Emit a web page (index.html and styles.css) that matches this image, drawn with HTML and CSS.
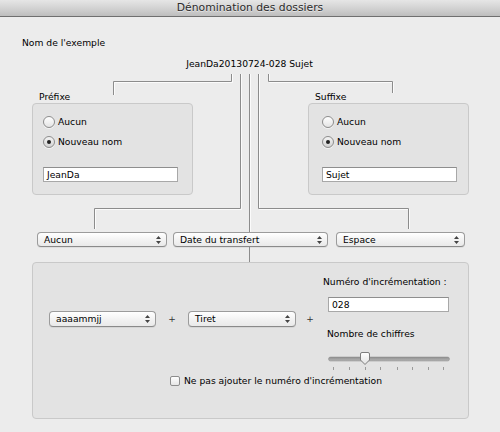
FILE: index.html
```html
<!DOCTYPE html>
<html lang="fr">
<head>
<meta charset="utf-8">
<title>Dénomination des dossiers</title>
<link rel="stylesheet" href="styles.css">
</head>
<body>
<div class="window">
  <div class="titlebar">Dénomination des dossiers</div>
  <div class="content">
    <div class="example-label">Nom de l'exemple</div>
    <div class="sample">JeanDa20130724-028 Sujet</div>

    <div class="groups">
      <div class="group">
        <div class="group-label">Préfixe</div>
        <div class="box">
          <div class="radio-row"><span class="radio"></span>Aucun</div>
          <div class="radio-row second"><span class="radio checked"></span>Nouveau nom</div>
          <div class="field">JeanDa</div>
        </div>
      </div>
      <div class="group group-right">
        <div class="group-label">Suffixe</div>
        <div class="box">
          <div class="radio-row"><span class="radio"></span>Aucun</div>
          <div class="radio-row second"><span class="radio checked"></span>Nouveau nom</div>
          <div class="field">Sujet</div>
        </div>
      </div>
    </div>

    <div class="selects">
      <div class="select sel-aucun">Aucun<svg class="arrows" width="5" height="8" viewBox="0 0 5 8"><path d="M2.5 0 L5 3 L0 3 Z M0 5 L5 5 L2.5 8 Z"/></svg></div>
      <div class="select sel-date">Date du transfert<svg class="arrows" width="5" height="8" viewBox="0 0 5 8"><path d="M2.5 0 L5 3 L0 3 Z M0 5 L5 5 L2.5 8 Z"/></svg></div>
      <div class="select sel-espace">Espace<svg class="arrows" width="5" height="8" viewBox="0 0 5 8"><path d="M2.5 0 L5 3 L0 3 Z M0 5 L5 5 L2.5 8 Z"/></svg></div>
    </div>

    <div class="panel">
      <div class="panel-top">
        <div class="format">
          <div class="select sel-date-fmt">aaaammjj<svg class="arrows" width="5" height="8" viewBox="0 0 5 8"><path d="M2.5 0 L5 3 L0 3 Z M0 5 L5 5 L2.5 8 Z"/></svg></div>
          <div class="plus plus-a">+</div>
          <div class="select sel-tiret">Tiret<svg class="arrows" width="5" height="8" viewBox="0 0 5 8"><path d="M2.5 0 L5 3 L0 3 Z M0 5 L5 5 L2.5 8 Z"/></svg></div>
          <div class="plus plus-b">+</div>
        </div>
        <div class="incr">
          <div class="incr-label">Numéro d'incrémentation :</div>
          <div class="field incr-field">028</div>
          <div class="digits-label">Nombre de chiffres</div>
          <svg class="slider" width="122" height="20" viewBox="0 0 122 20">
            <defs>
              <linearGradient id="trk" x1="0" y1="0" x2="0" y2="1">
                <stop offset="0" stop-color="#8f8f8f"/>
                <stop offset="1" stop-color="#b5b5b5"/>
              </linearGradient>
              <linearGradient id="knb" x1="0" y1="0" x2="0" y2="1">
                <stop offset="0" stop-color="#ffffff"/>
                <stop offset="1" stop-color="#e2e2e2"/>
              </linearGradient>
            </defs>
            <rect x="0.5" y="6" width="121" height="4" rx="2" fill="url(#trk)" stroke="#8a8a8a" stroke-width="0.5"/>
            <path d="M32.5 3 Q32.5 1.5 34 1.5 L40 1.5 Q41.5 1.5 41.5 3 L41.5 9 L37 13.5 L32.5 9 Z" fill="url(#knb)" stroke="#7d7d7d" stroke-width="1"/>
            <g stroke="#9a9a9a" stroke-width="1">
              <line x1="5.5" y1="16" x2="5.5" y2="19"/>
              <line x1="21.5" y1="16" x2="21.5" y2="19"/>
              <line x1="37.5" y1="16" x2="37.5" y2="19"/>
              <line x1="52.5" y1="16" x2="52.5" y2="19"/>
              <line x1="69.5" y1="16" x2="69.5" y2="19"/>
              <line x1="84.5" y1="16" x2="84.5" y2="19"/>
              <line x1="100.5" y1="16" x2="100.5" y2="19"/>
              <line x1="115.5" y1="16" x2="115.5" y2="19"/>
            </g>
          </svg>
        </div>
      </div>
      <div class="check-row"><span class="checkbox"></span>Ne pas ajouter le numéro d'incrémentation</div>
    </div>
  </div>

  <svg class="connectors" width="500" height="432" viewBox="0 0 500 432">
    <g fill="none" stroke="#ffffff" stroke-width="1" opacity="0.8">
      <polyline points="114.5,95 114.5,82.5 232.5,82.5 232.5,74"/>
      <polyline points="269.5,74 269.5,82.5 393.5,82.5 393.5,93"/>
      <polyline points="241.5,74 241.5,209.5 95.5,209.5 95.5,229"/>
      <polyline points="259.5,74 259.5,209.5 409.5,209.5 409.5,229"/>
      <line x1="250.5" y1="74" x2="250.5" y2="232"/>
    </g>
    <g fill="none" stroke="#8c8c8c" stroke-width="1">
      <polyline points="113.5,95 113.5,81.5 231.5,81.5 231.5,74"/>
      <polyline points="268.5,74 268.5,81.5 392.5,81.5 392.5,93"/>
      <polyline points="240.5,74 240.5,208.5 94.5,208.5 94.5,229"/>
      <polyline points="258.5,74 258.5,208.5 408.5,208.5 408.5,229"/>
      <line x1="249.5" y1="74" x2="249.5" y2="232"/>
      <line x1="249.5" y1="247" x2="249.5" y2="262"/>
    </g>
  </svg>
</div>
</body>
</html>
```

FILE: styles.css
```css
* { box-sizing: border-box; }

html, body {
  margin: 0;
  padding: 0;
  width: 500px;
  height: 432px;
  overflow: hidden;
  background: #ececec;
}

body {
  font-family: "DejaVu Sans", "Liberation Sans", sans-serif;
  font-size: 9.2px;
  color: #000;
}

.window {
  position: relative;
  width: 500px;
  height: 432px;
}

.titlebar {
  height: 17px;
  line-height: 16px;
  text-align: center;
  font-size: 10.8px;
  color: #2c2c2c;
  text-shadow: 0 1px 0 rgba(255,255,255,0.5);
  background: linear-gradient(#e6e6e6, #cfcfcf 60%, #bdbdbd);
  border-bottom: 1px solid #6f6f6f;
}

.content {
  line-height: 12px;
}

.example-label {
  margin-top: 20px;
  padding-left: 22px;
}

.sample {
  margin-top: 9px;
  text-align: center;
  padding-right: 1px;
}

.groups {
  display: flex;
  justify-content: space-between;
  margin-top: 21px;
  padding: 0 31px 0 32px;
}

.group {
  width: 161px;
}

.group-label {
  padding-left: 7px;
  height: 12px;
}

.box {
  height: 92px;
  background: #e3e3e3;
  border: 1px solid #c9c9c9;
  border-radius: 4px;
  padding: 12px 0 0 10px;
}

.group-right .box {
  padding-left: 13px;
}

.radio-row {
  display: flex;
  align-items: center;
  height: 12px;
}

.radio-row.second {
  margin-top: 8px;
}

.radio {
  width: 12px;
  height: 12px;
  border-radius: 50%;
  border: 1px solid #8d8d8d;
  background: linear-gradient(#ffffff, #e4e4e4);
  margin-right: 3px;
  display: flex;
  align-items: center;
  justify-content: center;
  box-shadow: 0 1px 0 rgba(255,255,255,0.6);
}

.radio.checked {
  background: linear-gradient(#f4f4f4, #d2d2d2);
}

.radio.checked::after {
  content: "";
  width: 4px;
  height: 4px;
  border-radius: 50%;
  background: #222;
}

.field {
  width: 135px;
  height: 15px;
  background: #fff;
  border: 1px solid #a8a8a8;
  border-top-color: #8e8e8e;
  padding-left: 3px;
  line-height: 13px;
}

.box .field {
  margin-top: 19px;
}

.selects {
  display: flex;
  margin-top: 37px;
  padding-left: 37px;
  height: 15px;
}

.select {
  position: relative;
  height: 15px;
  line-height: 13px;
  padding-left: 6px;
  background: linear-gradient(#ffffff, #f3f3f3 50%, #e9e9e9);
  border: 1px solid #9b9b9b;
  border-bottom-color: #8a8a8a;
  border-radius: 4px;
  box-shadow: 0 1px 0 rgba(0,0,0,0.06);
  display: flex;
  align-items: center;
  justify-content: space-between;
  padding-right: 5px;
}

.arrows {
  fill: #444;
  flex: none;
}

.sel-aucun { width: 130px; }
.sel-date { width: 155px; margin-left: 6px; }
.sel-espace { width: 129px; margin-left: 8px; }

.panel {
  margin: 15px 0 0 32px;
  width: 437px;
  height: 157px;
  background: #e3e3e3;
  border: 1px solid #c9c9c9;
  border-radius: 4px;
  padding: 13px 0 0 16px;
}

.panel-top {
  display: flex;
  align-items: flex-start;
}

.format {
  display: flex;
  align-items: center;
  margin-top: 35px;
}

.sel-date-fmt, .sel-tiret {
  height: 16px;
  line-height: 14px;
}

.sel-date-fmt { width: 107px; }
.sel-tiret { width: 108px; }

.plus {
  text-align: center;
  color: #333;
  font-size: 9px;
}

.plus-a { width: 32px; }
.plus-b { width: 27px; padding-left: 1px; }

.incr {
  display: flex;
  flex-direction: column;
  align-items: flex-start;
}

.incr-label {
  height: 12px;
}

.incr-field {
  margin: 9px 0 0 5px;
  width: 121px;
}

.digits-label {
  margin: 16px 0 0 4px;
  height: 12px;
}

.slider {
  display: block;
  margin: 11px 0 0 5px;
}

.check-row {
  display: flex;
  align-items: center;
  margin: 4px 0 0 121px;
  height: 12px;
}

.checkbox {
  width: 10px;
  height: 10px;
  border: 1px solid #8d8d8d;
  border-radius: 2px;
  background: linear-gradient(#ffffff, #e6e6e6);
  margin-right: 4px;
}

.connectors {
  position: absolute;
  left: 0;
  top: 0;
  pointer-events: none;
}
```
